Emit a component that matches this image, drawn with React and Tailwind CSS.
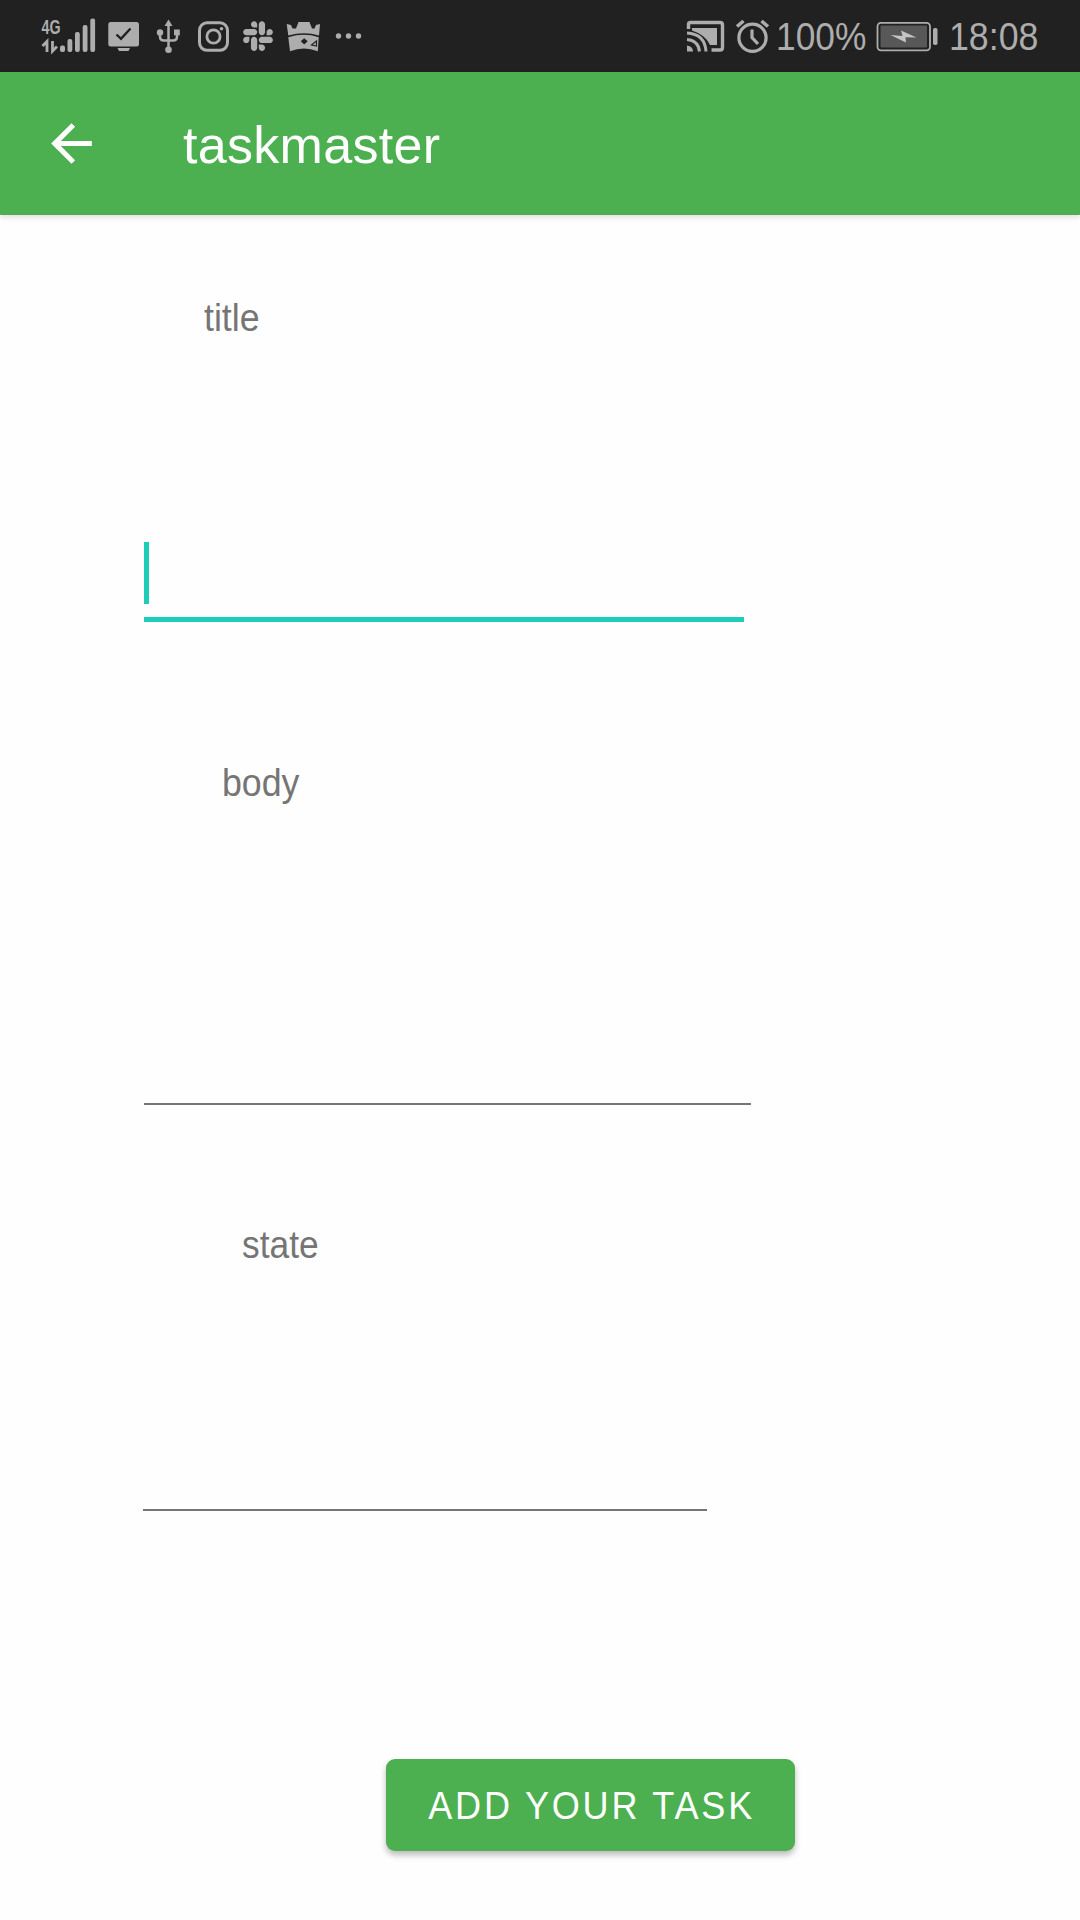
import React from "react";
import { FaSlack } from "react-icons/fa";
import { MdArrowBack } from "react-icons/md";

function Signal() {
  return (
    <svg className="w-[60px] h-[72px] shrink-0" viewBox="40 0 60 72" fill="#adadad">
      <text
        x="41.500"
        y="33.500"
        textLength="19"
        lengthAdjust="spacingAndGlyphs"
        className="font-['Liberation_Sans',sans-serif] text-[20px] font-bold"
      >
        4G
      </text>
      <path d="M42.500 46L47 41.500V52M52.500 41V51L57 46.500" fill="none" stroke="#adadad" strokeWidth="2.800" />
      <rect x="60" y="45.500" width="5" height="6.500" rx="2" />
      <rect x="67.500" y="39" width="4.800" height="13" rx="2" />
      <rect x="75" y="32" width="4.800" height="20" rx="2" />
      <rect x="82.700" y="25" width="4.800" height="27" rx="2" />
      <rect x="90.300" y="18.500" width="4.800" height="33.500" rx="2" />
    </svg>
  );
}

function Monitor() {
  return (
    <svg className="w-[46px] h-[72px] shrink-0" viewBox="100 0 46 72" fill="#adadad">
      <rect x="108.300" y="22" width="30.700" height="24.500" rx="2.500" />
      <path d="M117.500 48H130L128.500 51H119Z" />
      <path d="M116.500 34.500L121 38.800L130.500 28.500" fill="none" stroke="#212121" strokeWidth="2.400" />
    </svg>
  );
}

function Usb() {
  return (
    <svg className="w-[44px] h-[72px] shrink-0" viewBox="146 0 44 72" fill="#adadad">
      <path d="M168.500 19.500L172.500 26H164.500Z" />
      <circle cx="168.500" cy="49.800" r="3.300" />
      <circle cx="160" cy="32.500" r="3.200" />
      <rect x="174" y="29.500" width="5.800" height="5.800" />
      <path d="M168.500 25V48M160 32V36.500Q160 40.500 164 40.500H173Q177 40.500 177 36.500V33" fill="none" stroke="#adadad" strokeWidth="2.500" />
    </svg>
  );
}

function Instagram() {
  return (
    <svg className="w-[46px] h-[72px] shrink-0" viewBox="190 0 46 72" fill="none" stroke="#adadad">
      <rect x="199.500" y="22.800" width="28" height="27.500" rx="7.500" strokeWidth="3" />
      <circle cx="213.500" cy="36.500" r="6.600" strokeWidth="2.800" />
      <circle cx="221.500" cy="28.700" r="1.800" fill="#adadad" stroke="none" />
    </svg>
  );
}

function Crown() {
  return (
    <svg className="w-[48px] h-[72px] shrink-0" viewBox="280 0 48 72" fill="#adadad">
      <path d="M286.700 24L291 25L292.500 28.500H296L298.500 22H309.500L312 28.500H314.500L316 25L320 24L319 35.500Q304 31 288.300 35.500Z" />
      <path d="M288.300 37.200Q304 32.500 318.700 37.200L317.800 51.300Q304 45.500 290 51.300Z" />
      <path d="M300.800 41.300L304.200 38.200L307.700 41.300L304.200 44.500Z" fill="#212121" />
      <path d="M311.500 45L316.500 41V46Z" fill="none" stroke="#212121" strokeWidth="1.200" />
    </svg>
  );
}

function Dots() {
  return (
    <svg className="w-[40px] h-[72px] shrink-0" viewBox="328 0 40 72" fill="#adadad">
      <circle cx="338.500" cy="36" r="2.700" />
      <circle cx="348.500" cy="36" r="2.700" />
      <circle cx="358.500" cy="36" r="2.700" />
    </svg>
  );
}

function Cast() {
  return (
    <svg className="w-[48px] h-[72px] shrink-0" viewBox="680 0 48 72" fill="none" stroke="#adadad" strokeWidth="3">
      <path d="M688.500 29V24.500Q688.500 22.500 690.500 22.500H720Q722.500 22.500 722.500 25V47.500Q722.500 50 720 50H711.500" strokeWidth="3.400" />
      <path d="M692 28H717V45H710Q706 35 692 30.500Z" fill="#adadad" stroke="none" />
      <path d="M687 33Q705 34 706 51.500" />
      <path d="M687 39.500Q698.500 40.500 699.500 51.500" />
      <path d="M687 45.500Q693 46.500 693 51.500H687Z" fill="#adadad" stroke="none" />
    </svg>
  );
}

function Alarm() {
  return (
    <svg className="w-[50px] h-[72px] shrink-0" viewBox="728 0 50 72" fill="none" stroke="#adadad" strokeWidth="3.200">
      <circle cx="752.500" cy="37.800" r="13.600" />
      <path d="M737 26.500L743.500 21M768 26.500L761.500 21" strokeWidth="3.600" />
      <path d="M752 29.500V37.500L758 44" />
    </svg>
  );
}

function Battery() {
  return (
    <svg className="w-[66px] h-[72px] shrink-0" viewBox="872 0 66 72">
      <rect x="877.500" y="22.800" width="52.500" height="27.500" rx="3.500" fill="none" stroke="#adadad" strokeWidth="1.800" />
      <rect x="880.500" y="25.500" width="46.500" height="22" rx="1" fill="#585858" />
      <path d="M890.500 35L902.500 36L901 30.500L916.500 37.500L905.500 37.300L906 42.500Z" fill="#c4c4c4" />
      <rect x="933" y="28" width="4.500" height="17" rx="1.800" fill="#adadad" />
    </svg>
  );
}

function StatusBar() {
  return (
    <header className="flex h-[72px] shrink-0 items-center bg-[#212121] pl-[40px] text-[#adadad]">
      <Signal />
      <Monitor />
      <Usb />
      <Instagram />
      <div className="flex w-[44px] justify-center">
        <FaSlack size={34} />
      </div>
      <Crown />
      <Dots />
      <div className="w-[312px]" />
      <Cast />
      <Alarm />
      <div className="-ml-[2px] w-[96px] whitespace-nowrap">
        <span className="inline-block origin-left scale-x-[0.93] pt-[2px] text-[38px] leading-[72px]">100%</span>
      </div>
      <Battery />
      <span className="ml-[11px] inline-block origin-left scale-x-[0.94] pt-[2px] text-[38px] leading-[72px]">18:08</span>
    </header>
  );
}

export default function App() {
  return (
    <div className="flex h-[1920px] w-[1080px] flex-col overflow-hidden bg-[#fefefe] font-['Liberation_Sans',sans-serif]">
      <StatusBar />
      <div className="flex h-[143px] shrink-0 items-center bg-[#4caf50] pl-[41px] text-white shadow-[0_2px_6px_rgba(0,0,0,0.14)]">
        <MdArrowBack size={61} />
        <h1 className="mt-[2px] ml-[81px] text-[52px] leading-none tracking-[0.3px]">taskmaster</h1>
      </div>
      <main className="flex flex-col items-start text-[38px] leading-[44px] text-[#757575]">
        <label className="mt-[81px] ml-[204px] origin-left scale-x-[0.94]">title</label>
        <div className="mt-[202px] ml-[144px] flex h-[80px] w-[600px] items-start border-b-5 border-[#1dcdb9]">
          <div className="h-[62px] w-[5px] bg-[#1dcdb9]" />
        </div>
        <label className="mt-[139px] ml-[222px] origin-left scale-x-[0.94]">body</label>
        <div className="mt-[298px] ml-[144px] h-[2px] w-[607px] bg-[#757575]" />
        <label className="mt-[118px] ml-[242px] origin-left scale-x-[0.93]">state</label>
        <div className="mt-[242px] ml-[143px] h-[2px] w-[564px] bg-[#757575]" />
        <button className="mt-[248px] ml-[386px] flex h-[92px] w-[409px] items-center justify-center rounded-[9px] bg-[#4caf50] pt-[2px] text-white shadow-[0_4px_6px_rgba(0,0,0,0.27)]">
          <span className="ml-[2px] scale-x-[0.925] whitespace-nowrap text-[39px] tracking-[3px]">ADD YOUR TASK</span>
        </button>
      </main>
    </div>
  );
}
